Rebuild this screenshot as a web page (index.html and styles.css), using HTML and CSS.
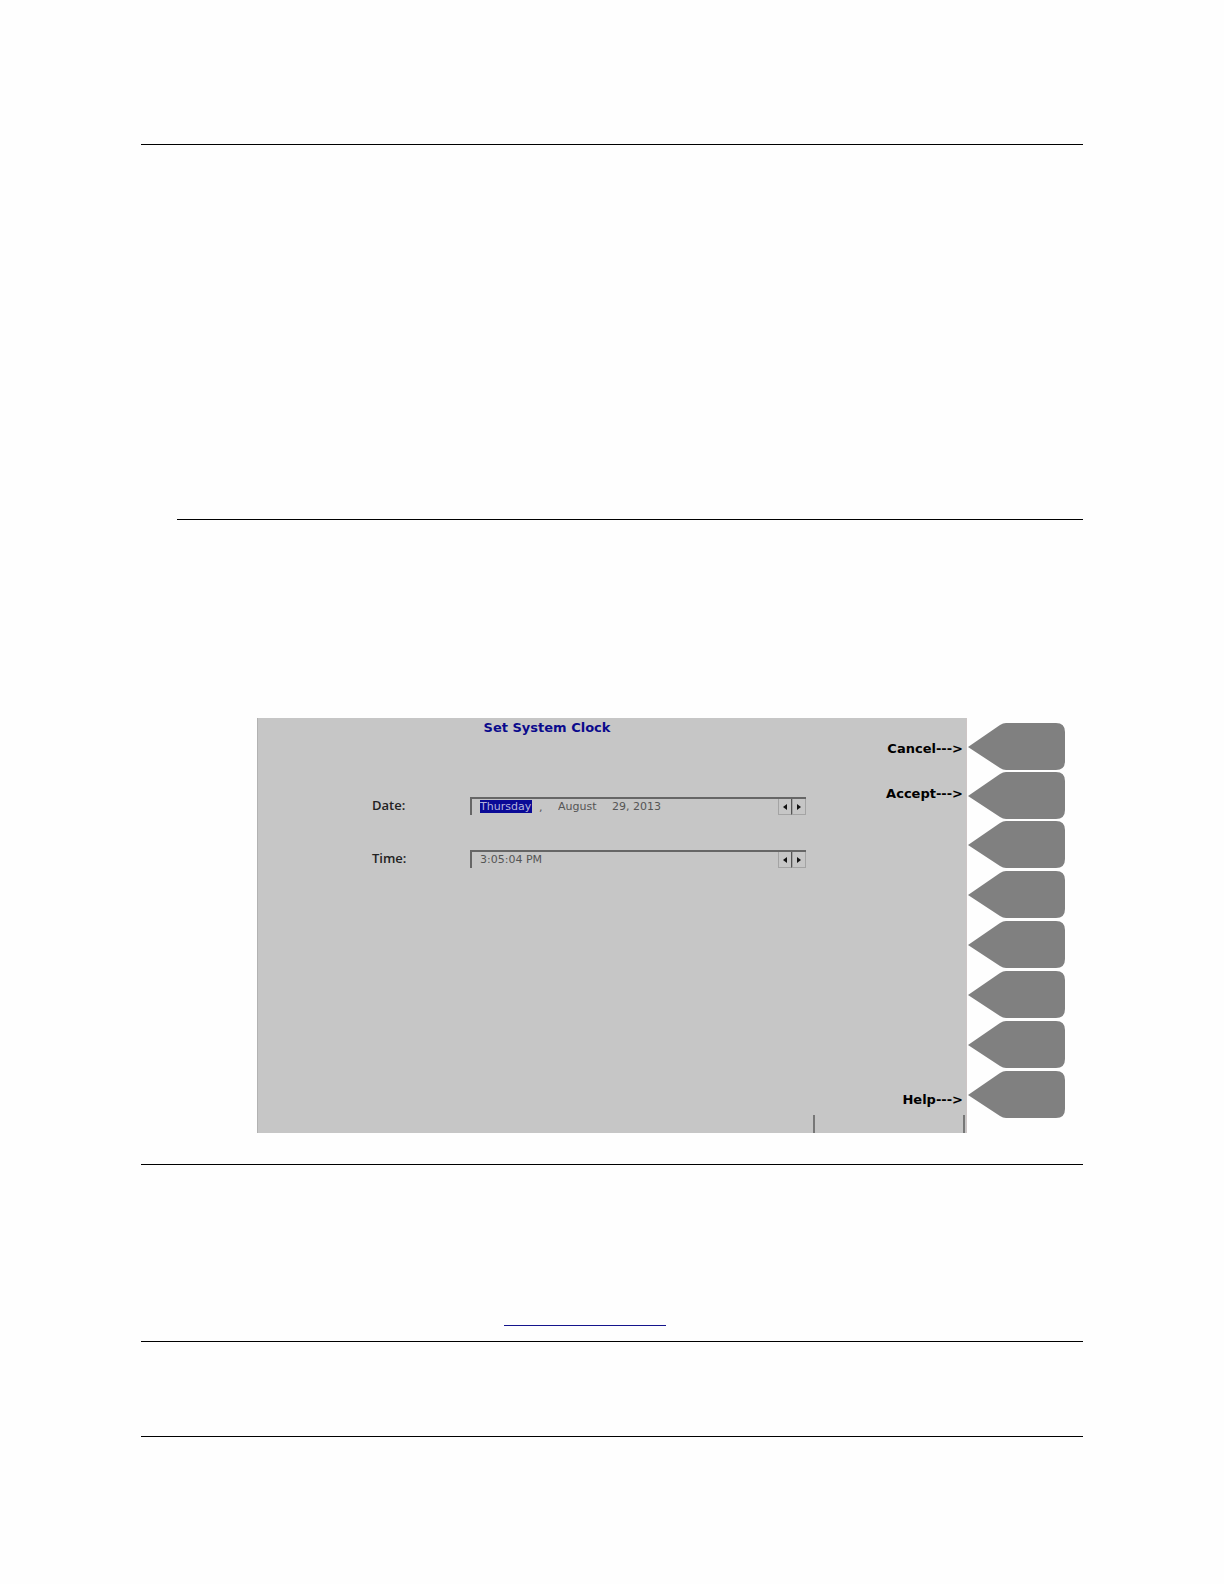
FILE: index.html
```
<!DOCTYPE html>
<html lang="en">
<head>
    <meta charset="UTF-8">
    <meta name="viewport" content="width=device-width, initial-scale=1.0">
    <title>Set System Clock</title>
    <link rel="stylesheet" href="styles.css">
</head>
<body>
    <svg class="sprite" aria-hidden="true">
        <symbol id="key" viewBox="0 0 97 47">
            <path d="M0 24 L32 2 Q35 0 38 0 H88 Q97 0 97 9 V38 Q97 47 88 47 H38 Q35 47 32 45 Z"/>
        </symbol>
        <symbol id="left" viewBox="0 0 6 8"><path d="M5 1 V7 L1 4 Z"/></symbol>
        <symbol id="right" viewBox="0 0 6 8"><path d="M1 1 V7 L5 4 Z"/></symbol>
    </svg>

    <main class="page">
        <hr>
        <section class="intro"></section>
        <hr class="indent">

        <div class="figure">
            <form class="screen">
                <div class="screen-main">
                    <h1>Set System Clock</h1>

                    <div class="row">
                        <label for="weekday">Date:</label>
                        <div class="field">
                            <input class="weekday" id="weekday" type="text" value="Thursday">
                            <span class="comma">,</span>
                            <input class="month" type="text" value="August" aria-label="Month">
                            <input class="day" type="text" value="29, 2013" aria-label="Day and year">
                            <div class="spin">
                                <button type="button" aria-label="Previous date"><svg><use href="#left"/></svg></button>
                                <button type="button" aria-label="Next date"><svg><use href="#right"/></svg></button>
                            </div>
                        </div>
                    </div>

                    <div class="row">
                        <label for="time">Time:</label>
                        <div class="field">
                            <input class="time" id="time" type="text" value="3:05:04 PM">
                            <div class="spin">
                                <button type="button" aria-label="Earlier"><svg><use href="#left"/></svg></button>
                                <button type="button" aria-label="Later"><svg><use href="#right"/></svg></button>
                            </div>
                        </div>
                    </div>
                </div>

                <div class="key-labels">
                    <span>Cancel---&gt;</span>
                    <span>Accept---&gt;</span>
                    <span class="help">Help---&gt;</span>
                </div>

                <div class="status"></div>
            </form>

            <div class="keys">
                <button type="button" aria-label="Cancel"><svg><use href="#key"/></svg></button>
                <button type="button" aria-label="Accept"><svg><use href="#key"/></svg></button>
                <button type="button" aria-label="Key 3"><svg><use href="#key"/></svg></button>
                <button type="button" aria-label="Key 4"><svg><use href="#key"/></svg></button>
                <button type="button" aria-label="Key 5"><svg><use href="#key"/></svg></button>
                <button type="button" aria-label="Key 6"><svg><use href="#key"/></svg></button>
                <button type="button" aria-label="Key 7"><svg><use href="#key"/></svg></button>
                <button type="button" aria-label="Help"><svg><use href="#key"/></svg></button>
            </div>
        </div>

        <hr>
        <section class="reference">
            <a href="#" aria-label="Reference"></a>
        </section>
        <hr>
        <section class="note"></section>
        <hr>
    </main>
</body>
</html>
```

FILE: styles.css
```
* {
    margin: 0;
    padding: 0;
    box-sizing: border-box;
}

body {
    background: #fefefe;
    font-family: "DejaVu Sans", Verdana, sans-serif;
    font-size: 11px;
    color: #000;
}

.sprite {
    display: none;
}

.page {
    padding: 144px 141px 147px;
}

hr {
    border: none;
    border-top: 1px solid #000;
}

hr.indent {
    margin-left: 36px;
}

.intro {
    height: 374px;
}

/* screen with the softkeys beside it */
.figure {
    display: flex;
    margin: 198px 18px 31px 116px;
}

.screen {
    flex: 1;
    display: grid;
    grid-template-columns: 1fr 130px;
    grid-template-rows: 397px 18px;
    background: #c6c6c6;
    border-left: 1px solid #b2b2b2;
    border-right: 1px solid #cdc5c5;
}

.screen-main h1 {
    margin-bottom: 59px;
    line-height: 20px;
    font-size: 13px;
    text-align: center;
    color: #0a0a8c;
}

.row {
    display: flex;
    align-items: center;
    margin: 0 30px 35px 114px;
}

.row label {
    width: 98px;
    font-family: "Open Sans", sans-serif;
    font-size: 13px;
    font-weight: 600;
    line-height: 16px;
    padding-bottom: 2px;
    color: #222;
}

.field {
    flex: 1;
    display: flex;
    align-items: center;
    height: 18px;
    padding-left: 8px;
    border-top: 2px solid #666;
    border-left: 2px solid #666;
}

.field input {
    height: 13px;
    margin-bottom: 2px;
    border: none;
    background: transparent;
    font: inherit;
    color: #555;
}

.field .weekday {
    width: 52px;
    background: #0a0a96;
    color: #b4b4dc;
}

.comma {
    width: 26px;
    padding-left: 7px;
    color: #555;
}

.field .month {
    width: 54px;
}

.field .day {
    width: 60px;
}

.field .time {
    width: 90px;
}

.spin {
    display: flex;
    height: 16px;
    margin-left: auto;
}

.spin button {
    display: flex;
    align-items: center;
    justify-content: center;
    width: 14px;
    border: 1px solid #a4a4a4;
    border-top: none;
    background: #c6c6c6;
}

.spin button:first-child {
    border-right: 1px solid #555;
}

.spin svg {
    width: 6px;
    height: 8px;
    fill: #111;
}

.key-labels {
    display: flex;
    flex-direction: column;
    align-items: flex-end;
    gap: 27px;
    padding: 22px 3px 6px 0;
    font-size: 13px;
    font-weight: bold;
    line-height: 18px;
}

.key-labels .help {
    margin-top: auto;
}

.status {
    grid-column: 2;
    width: 152px;
    margin-left: -23px;
    border-left: 2px solid #777;
    border-right: 2px solid #777;
}

.keys {
    display: flex;
    flex-direction: column;
    gap: 3px;
    width: 98px;
    padding-top: 5px;
}

.keys button {
    height: 47px;
    border: none;
    background: none;
}

.keys button:nth-child(-n+2) {
    margin-bottom: -1px;
}

.keys svg {
    display: block;
    width: 97px;
    height: 47px;
    margin-left: 1px;
    fill: #808080;
}

.reference {
    display: flex;
    align-items: flex-end;
    height: 176px;
    padding: 0 0 15px 363px;
}

.reference a {
    width: 162px;
    height: 18px;
    border-bottom: 1px solid #14148c;
}

.note {
    height: 94px;
}
```
